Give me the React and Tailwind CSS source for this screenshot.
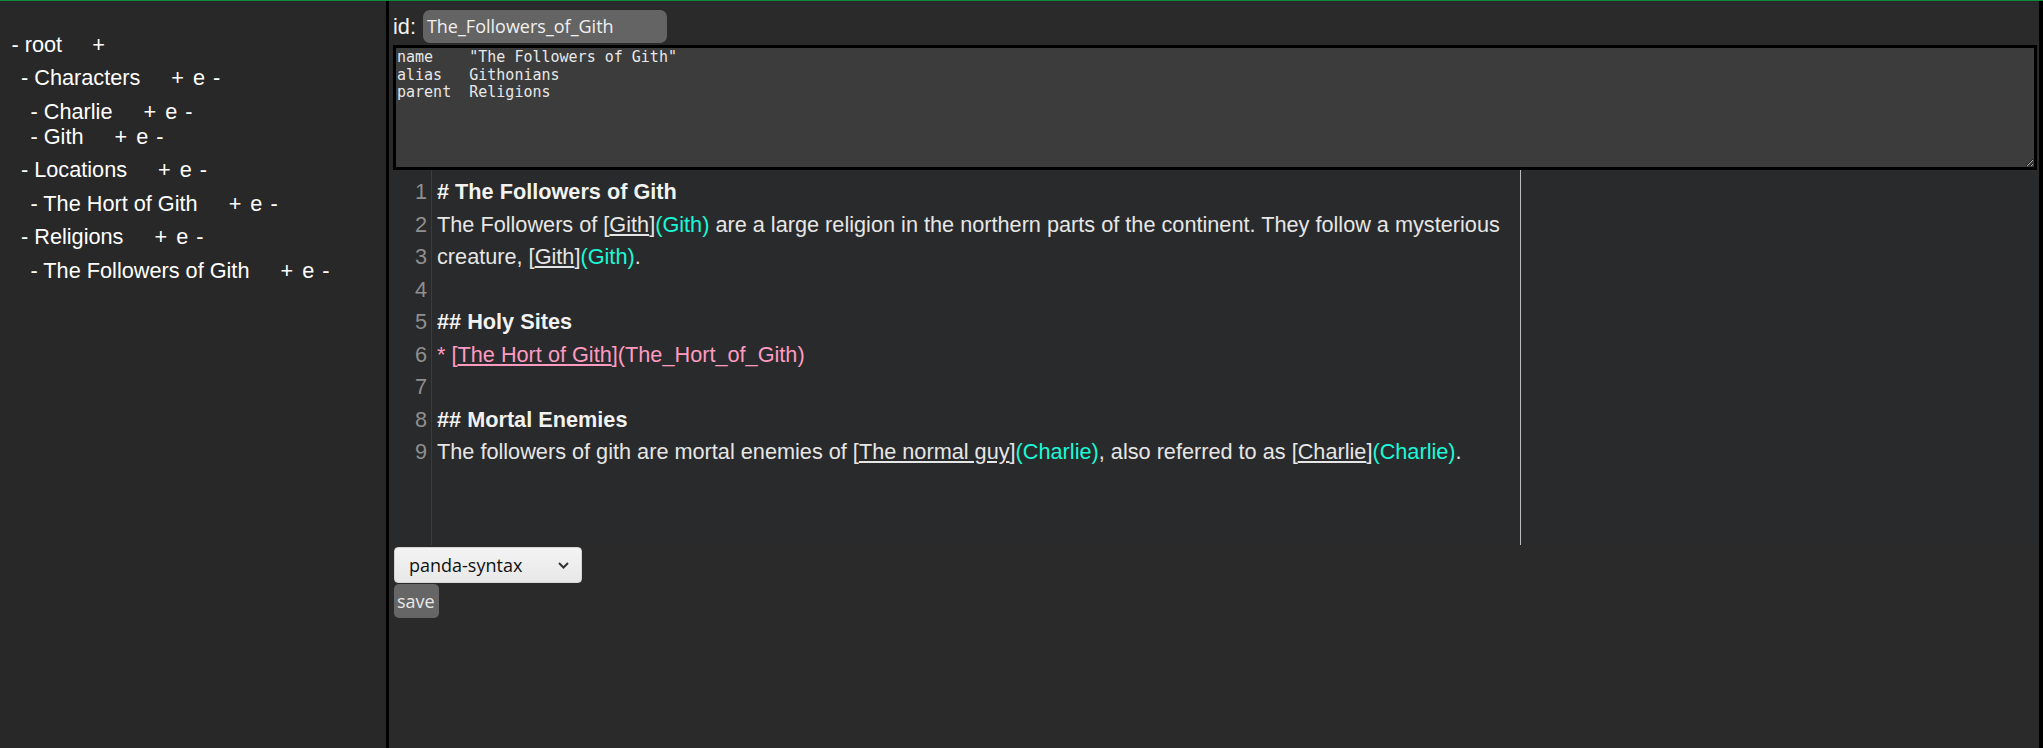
import React from "react";

const tree = {
  name: "root",
  root: true,
  children: [
    { name: "Characters", children: [{ name: "Charlie" }, { name: "Gith" }] },
    { name: "Locations", children: [{ name: "The Hort of Gith" }] },
    { name: "Religions", children: [{ name: "The Followers of Gith" }] },
  ],
};

function TreeNode({ node }) {
  return (
    <li>
      <div className="h-[25px] leading-[25px] whitespace-pre">
        {"- " + node.name}
        <span className={node.root ? "ml-[30px]" : "ml-[31px]"}>+</span>
        {!node.root && (
          <>
            <span className="ml-[9px]">e</span>
            <span className="ml-[8px]">-</span>
          </>
        )}
      </div>
      {node.children && (
        <ul className="ml-[9.5px] my-[8.5px]">
          {node.children.map((c) => (
            <TreeNode key={c.name} node={c} />
          ))}
        </ul>
      )}
    </li>
  );
}

const segClass = {
  h: "font-bold text-[#f2f2f2]",
  t: "text-[#e6e6e6]",
  u: "text-[#e6e6e6] underline",
  c: "text-[#19f9d8]",
  p: "text-[#ff9ac1]",
  pu: "text-[#ff9ac1] underline",
};

const lines = [
  [["h", "# The Followers of Gith"]],
  [
    ["t", "The Followers of ["],
    ["u", "Gith"],
    ["t", "]"],
    ["c", "(Gith)"],
    ["t", " are a large religion in the northern parts of the continent. They follow a mysterious"],
  ],
  [
    ["t", "creature, ["],
    ["u", "Gith"],
    ["t", "]"],
    ["c", "(Gith)"],
    ["t", "."],
  ],
  [],
  [["h", "## Holy Sites"]],
  [
    ["p", "* ["],
    ["pu", "The Hort of Gith"],
    ["p", "]"],
    ["p", "(The_Hort_of_Gith)"],
  ],
  [],
  [["h", "## Mortal Enemies"]],
  [
    ["t", "The followers of gith are mortal enemies of ["],
    ["u", "The normal guy"],
    ["t", "]"],
    ["c", "(Charlie)"],
    ["t", ", also referred to as ["],
    ["u", "Charlie"],
    ["t", "]"],
    ["c", "(Charlie)"],
    ["t", "."],
  ],
];

const meta = `name    "The Followers of Gith"
alias   Githonians
parent  Religions`;

export default function App() {
  return (
    <div className="w-[2043px] h-[748px] bg-black flex flex-col overflow-hidden font-['Liberation_Sans',Arial,sans-serif]">
      <div className="h-[1px] w-full bg-[#0d8b3d]" />
      <div className="flex flex-1 min-h-0">
        {/* Sidebar */}
        <div className="w-[386px] bg-[#282828] text-white text-[21.7px] pt-[30.5px] pl-[11.5px]">
          <ul>
            <TreeNode node={tree} />
          </ul>
        </div>

        {/* Main */}
        <div className="ml-[3px] w-[1650px] bg-[#2a2a2a] pl-[4px] pr-[2px] flex flex-col">
          <div className="mt-[9px] mb-[2px] flex items-center h-[33px]">
            <span className="text-[21.7px] text-[#f2f2f2] leading-[25px]">id:</span>
            <div className="ml-[7px] w-[244px] h-[33px] rounded-[7px] bg-[#646464] pl-[4px] flex items-center font-['Open_Sans','Noto_Sans',sans-serif] text-[18px] text-[#f0f0f0]">
              The_Followers_of_Gith
            </div>
          </div>

          <textarea
            readOnly
            value={meta}
            spellCheck={false}
            className="block w-full h-[125px] border-[3px] border-black bg-[#3c3c3c] text-[#e8e8e8] font-['DejaVu_Sans_Mono',monospace] text-[15px] leading-[17.5px] pl-[1px] pr-[2px] pt-[1px] outline-none"
          />

          {/* Editor */}
          <div className="h-[375px] w-full bg-[#292a2b] flex text-[21.7px] leading-[32.5px]">
            <div className="w-[39px] border-r border-[#3b3c3e] pt-[6px] pr-[4px] text-right text-[#8f8f8f]">
              {lines.map((_, i) => (
                <div key={i} className="h-[32.5px]">
                  {i + 1}
                </div>
              ))}
            </div>
            <div className="w-[1089px] border-r border-[#bdbdbd] pt-[6px] pl-[5px]">
              {lines.map((segs, i) => (
                <div key={i} className="h-[32.5px] whitespace-pre">
                  {segs.map(([k, s], j) => (
                    <span key={j} className={segClass[k]}>
                      {s}
                    </span>
                  ))}
                </div>
              ))}
            </div>
            <div className="flex-1" />
          </div>

          <div className="mt-[2px] ml-[1px] w-[188px] h-[36px] rounded-[4px] border border-[#d4d4d4] bg-gradient-to-b from-[#f3f3f3] to-[#e8e8e8] flex items-center justify-between pl-[14px] pr-[12px] font-['Open_Sans','Noto_Sans',sans-serif] text-[18px] text-[#111]">
            <span>panda-syntax</span>
            <svg width="11" height="7" viewBox="0 0 11 7" fill="none">
              <path d="M1 1 L5.5 5.5 L10 1" stroke="#333" strokeWidth="2" />
            </svg>
          </div>

          <div className="mt-[1px] ml-[1px] w-[45px] h-[34px] rounded-[5px] bg-[#666666] flex items-center pl-[3px] font-['Open_Sans','Noto_Sans',sans-serif] text-[18px] text-[#e8e8e8]">
            save
          </div>
        </div>
      </div>
    </div>
  );
}
